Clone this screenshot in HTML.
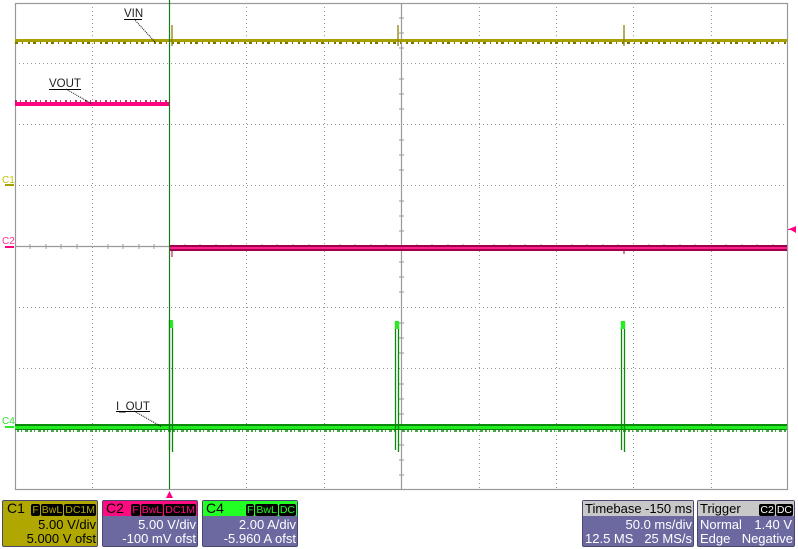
<!DOCTYPE html>
<html><head><style>
body{margin:0;width:798px;height:549px;background:#fff;overflow:hidden;font-family:"Liberation Sans",sans-serif;position:relative}
svg{position:absolute;left:0;top:0}
.box{position:absolute;background:#6c69a1;border:1px solid #4a4870;border-radius:2px;color:#fff;font-size:13px;line-height:14px;box-sizing:border-box}
.hdr{height:15px;position:relative;line-height:15px}
.r{text-align:right;padding-right:1px}
.tag{background:#000;border-radius:2px;padding:0 1px;margin-left:1px;font-size:10.5px}
</style></head><body>
<svg width="798" height="549" xmlns="http://www.w3.org/2000/svg">
<g stroke="#999" stroke-width="1" stroke-dasharray="1,3" fill="none">
<path d="M92.5 3V489M169.5 3V489M246.5 3V489M324.5 3V489M479.5 3V489M556.5 3V489M633.5 3V489M711.5 3V489"/>
<path d="M15 63.5H787M15 124.5H787M15 185.5H787M15 307.5H787M15 368.5H787M15 429.5H787"/>
</g>
<g stroke="#999" stroke-width="1.2" fill="none">
<rect x="15.5" y="3.5" width="772" height="486"/>
<path d="M401.5 3V489M15 246.5H787"/>
</g>
<g stroke="#999" stroke-width="1">
<path d="M30 244V249M46 244V249M61 244V249M77 244V249M108 244V249M123 244V249M139 244V249M154 244V249M185 244V249M200 244V249M216 244V249M231 244V249M262 244V249M277 244V249M293 244V249M309 244V249M340 244V249M355 244V249M371 244V249M386 244V249M417 244V249M432 244V249M448 244V249M463 244V249M494 244V249M510 244V249M525 244V249M541 244V249M572 244V249M587 244V249M603 244V249M618 244V249M649 244V249M664 244V249M680 244V249M695 244V249M726 244V249M742 244V249M757 244V249M773 244V249"/>
<path d="M399 18H404M399 33H404M399 48H404M399 79H404M399 94H404M399 109H404M399 140H404M399 155H404M399 170H404M399 201H404M399 216H404M399 231H404M399 262H404M399 277H404M399 292H404M399 323H404M399 338H404M399 353H404M399 384H404M399 399H404M399 414H404M399 445H404M399 460H404M399 475H404"/>
</g>
<rect x="15" y="39" width="772" height="3" fill="#a8a000"/>
<path d="M15 43H787" stroke="#7a7300" stroke-width="2" stroke-dasharray="3,4,1,5,2,3"/>
<path d="M172 25V46M398 25V46M624 25V46" stroke="#8a8200" stroke-width="1.3"/>
<rect x="15" y="102" width="154" height="4" fill="#ff0080"/>
<path d="M15 101H169" stroke="#a0004a" stroke-width="1.5" stroke-dasharray="2,3,1,4"/>
<rect x="170" y="245" width="617" height="6" fill="#a0004a"/>
<rect x="170" y="247" width="617" height="2" fill="#ff2090"/>
<path d="M172 251V257M624 251V254" stroke="#a0004a" stroke-width="1"/>
<rect x="15" y="424" width="772" height="6" fill="#0a8a0a"/>
<rect x="15" y="426" width="772" height="3" fill="#22ee22"/>
<path d="M17 431H787" stroke="#0a8a0a" stroke-width="1.5" stroke-dasharray="2,2,1,3,3,2"/>
<g stroke="#0a8a0a" stroke-width="1.3" fill="none">
<path d="M169.5 320V450M172.5 322V452M395.5 321V450M398.5 322V452M621.5 321V450M624.5 322V452"/>
</g>
<rect x="169" y="320" width="4" height="8" fill="#22ee22"/>
<rect x="395" y="321" width="4" height="8" fill="#22ee22"/>
<rect x="621" y="321" width="4" height="8" fill="#22ee22"/>
<path d="M169.5 0V489" stroke="#1a7a1a" stroke-width="1.2"/>
<g font-family="Liberation Sans" font-size="11.5" fill="#222">
<text x="124" y="17">VIN</text><path d="M124 19.5H142" stroke="#000"/><path d="M134 19L155 42" stroke="#000" stroke-dasharray="1,1"/>
<text x="49" y="87">VOUT</text><path d="M49 89.5H81" stroke="#000"/><path d="M66 89L92 104" stroke="#000" stroke-dasharray="1,1"/>
<text x="116" y="410">I_OUT</text><path d="M116 411.5H150" stroke="#000"/><path d="M134 411L162 427" stroke="#000" stroke-dasharray="1,1"/>
</g>
<g font-family="Liberation Sans" font-size="10">
<text x="2" y="183" fill="#c8c000">C1</text><rect x="5" y="184" width="9" height="2" fill="#a8a000"/>
<text x="2" y="244" fill="#ff3090">C2</text><rect x="5" y="246" width="9" height="2" fill="#ff0080"/>
<text x="2" y="424" fill="#33dd33">C4</text><rect x="5" y="426" width="9" height="2" fill="#22ee22"/>
</g>
<path d="M789 229L796 226V233Z" fill="#ff0080"/><rect x="788" y="229" width="3" height="1" fill="#ff0080"/>
<path d="M166 498L169.5 491L173 498Z" fill="#ff0080"/>
</svg>
<div class="box" style="left:2px;top:500px;width:96px;height:47px;background:#b0a800;color:#000">
 <div class="hdr"><span style="position:absolute;left:4px;font-size:14px">C1</span><span style="position:absolute;right:1px;color:#b0a800"><span class="tag">F</span><span class="tag">BwL</span><span class="tag">DC1M</span></span></div>
 <div class="r" style="margin-top:2px">5.00 V/div</div><div class="r">5.000 V ofst</div></div>
<div class="box" style="left:102px;top:500px;width:96px;height:47px">
 <div class="hdr" style="background:#ff0a80;color:#000"><span style="position:absolute;left:3px;font-size:14px">C2</span><span style="position:absolute;right:1px;color:#ff0a80"><span class="tag">F</span><span class="tag">BwL</span><span class="tag">DC1M</span></span></div>
 <div class="r" style="margin-top:2px">5.00 V/div</div><div class="r">-100 mV ofst</div></div>
<div class="box" style="left:202px;top:500px;width:96px;height:47px">
 <div class="hdr" style="background:#22ff22;color:#000"><span style="position:absolute;left:3px;font-size:14px">C4</span><span style="position:absolute;right:1px;color:#22ff22"><span class="tag">F</span><span class="tag">BwL</span><span class="tag">DC</span></span></div>
 <div class="r" style="margin-top:2px">2.00 A/div</div><div class="r">-5.960 A ofst</div></div>
<div class="box" style="left:582px;top:500px;width:112px;height:47px">
 <div class="hdr" style="background:#c8c8c8;color:#000;display:flex;justify-content:space-between;padding:0 1px 0 2px">Timebase<span>-150 ms</span></div>
 <div class="r" style="margin-top:2px">50.0 ms/div</div><div style="display:flex;justify-content:space-between;padding:0 1px 0 2px">12.5 MS<span>25 MS/s</span></div></div>
<div class="box" style="left:697px;top:500px;width:98px;height:47px">
 <div class="hdr" style="background:#c8c8c8;color:#000;display:flex;justify-content:space-between;padding:0 1px 0 2px">Trigger<span style="color:#fff"><span class="tag">C2</span><span class="tag">DC</span></span></div>
 <div style="display:flex;justify-content:space-between;padding:0 2px;margin-top:2px">Normal<span>1.40 V</span></div><div style="display:flex;justify-content:space-between;padding:0 1px 0 2px">Edge<span>Negative</span></div></div>
</body></html>
